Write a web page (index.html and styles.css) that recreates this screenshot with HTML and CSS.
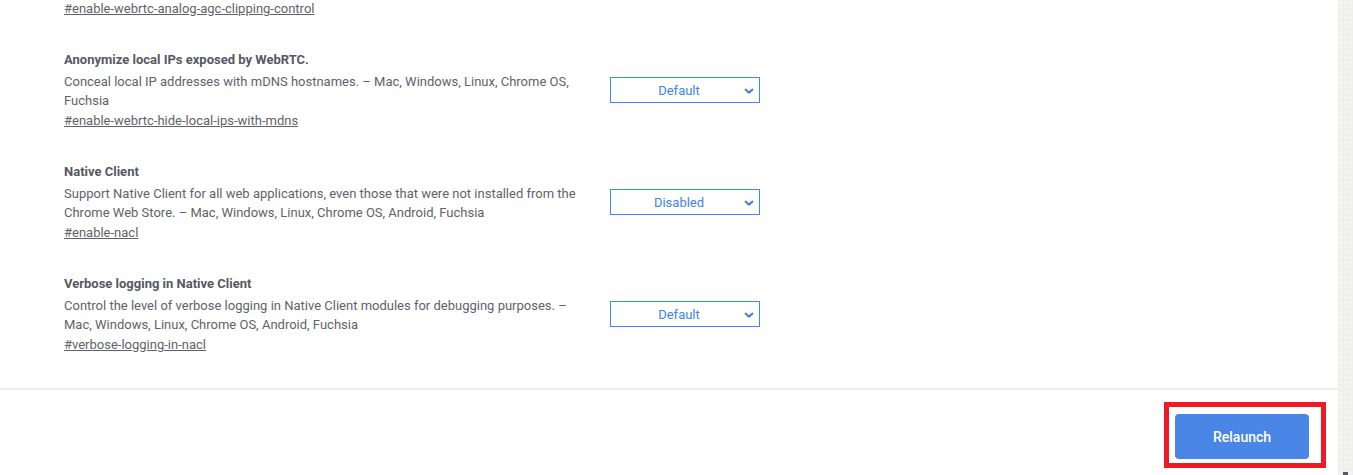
FILE: index.html
```html
<!DOCTYPE html>
<html lang="en">
<head>
<meta charset="utf-8">
<title>Experiments</title>
<link rel="stylesheet" href="styles.css">
</head>
<body>
<div class="page">
  <div class="main">
    <div class="content">
      <div class="experiments">
        <div class="experiment">
          <div class="exp-text">
            <div class="exp-name">WebRTC Analog AGC clipping control</div>
            <div class="exp-desc">Enables the WebRTC analog AGC clipping control logic. – Mac, Windows, Linux, Chrome OS, Fuchsia</div>
            <a class="exp-link" href="#">#enable-webrtc-analog-agc-clipping-control</a>
          </div>
          <div class="select"><span>Default</span><svg class="chev" width="10" height="6" viewBox="0 0 10 6"><polyline points="1,1 5,4.6 9,1" fill="none" stroke="#3f7fe9" stroke-width="2"/></svg></div>
        </div>
        <div class="experiment">
          <div class="exp-text">
            <div class="exp-name">Anonymize local IPs exposed by WebRTC.</div>
            <div class="exp-desc">Conceal local IP addresses with mDNS hostnames. – Mac, Windows, Linux, Chrome OS, Fuchsia</div>
            <a class="exp-link" href="#">#enable-webrtc-hide-local-ips-with-mdns</a>
          </div>
          <div class="select"><span>Default</span><svg class="chev" width="10" height="6" viewBox="0 0 10 6"><polyline points="1,1 5,4.6 9,1" fill="none" stroke="#3f7fe9" stroke-width="2"/></svg></div>
        </div>
        <div class="experiment">
          <div class="exp-text">
            <div class="exp-name">Native Client</div>
            <div class="exp-desc">Support Native Client for all web applications, even those that were not installed from the Chrome Web Store. – Mac, Windows, Linux, Chrome OS, Android, Fuchsia</div>
            <a class="exp-link" href="#">#enable-nacl</a>
          </div>
          <div class="select"><span>Disabled</span><svg class="chev" width="10" height="6" viewBox="0 0 10 6"><polyline points="1,1 5,4.6 9,1" fill="none" stroke="#3f7fe9" stroke-width="2"/></svg></div>
        </div>
        <div class="experiment">
          <div class="exp-text">
            <div class="exp-name">Verbose logging in Native Client</div>
            <div class="exp-desc">Control the level of verbose logging in Native Client modules for debugging purposes. – Mac, Windows, Linux, Chrome OS, Android, Fuchsia</div>
            <a class="exp-link" href="#">#verbose-logging-in-nacl</a>
          </div>
          <div class="select"><span>Default</span><svg class="chev" width="10" height="6" viewBox="0 0 10 6"><polyline points="1,1 5,4.6 9,1" fill="none" stroke="#3f7fe9" stroke-width="2"/></svg></div>
        </div>
        <div class="experiment">
          <div class="exp-text">
            <div class="exp-name">Extensions on chrome:// URLs</div>
            <div class="exp-desc">Enables running extensions on chrome:// URLs, where extensions explicitly request this permission. – Mac, Windows, Linux, Chrome OS, Android, Fuchsia</div>
            <a class="exp-link" href="#">#extensions-on-chrome-urls</a>
          </div>
          <div class="select"><span>Default</span><svg class="chev" width="10" height="6" viewBox="0 0 10 6"><polyline points="1,1 5,4.6 9,1" fill="none" stroke="#3f7fe9" stroke-width="2"/></svg></div>
        </div>
      </div>
    </div>
    <div class="separator"></div>
    <div class="footer">
      <div class="relaunch-wrap">
        <button class="relaunch">Relaunch</button>
        <div class="highlight"></div>
      </div>
    </div>
  </div>
  <div class="scrollbar"><div class="arrow"></div></div>
</div>
</body>
</html>
```

FILE: styles.css
```css
html, body {
  margin: 0;
  padding: 0;
  height: 100%;
  background: #ffffff;
}

body {
  font-family: Roboto, "Liberation Sans", Arial, sans-serif;
  font-size: 13px;
  color: #5f6368;
}

.page {
  display: flex;
  height: 475px;
  width: 1353px;
  overflow: hidden;
}

.main {
  flex: 1;
  display: flex;
  flex-direction: column;
  min-width: 0;
}

.content {
  height: 388px;
  overflow: hidden;
  flex: none;
}

.experiments {
  margin-top: -62px;
  padding-left: 64px;
}

.experiment {
  display: grid;
  grid-template-columns: 520px 150px;
  column-gap: 26px;
  align-items: center;
  height: 80px;
  margin-bottom: 32px;
}

.exp-text {
  display: flex;
  flex-direction: column;
  align-items: flex-start;
}

.exp-name {
  font-weight: 700;
  color: #555963;
  line-height: 20px;
  margin-bottom: 2px;
}

.exp-desc {
  line-height: 19px;
}

.exp-link {
  color: #5f6368;
  line-height: 19px;
  margin-top: 1px;
  text-decoration: underline;
}

.select {
  position: relative;
  box-sizing: border-box;
  width: 150px;
  height: 26px;
  border: 1px solid #4285f4;
  color: #4283ee;
  display: flex;
  align-items: center;
  justify-content: center;
  padding-right: 12px;
  background: #fff;
}

.chev {
  position: absolute;
  right: 5px;
  top: 10px;
}

.separator {
  height: 2px;
  background: #eeeeec;
  flex: none;
}

.footer {
  flex: 1;
  display: flex;
  justify-content: flex-end;
  align-items: flex-start;
  padding-top: 24px;
  padding-right: 29px;
}

.relaunch-wrap {
  position: relative;
}

.relaunch {
  display: block;
  width: 134px;
  height: 45px;
  border: none;
  border-radius: 4px;
  background: #4a86e6;
  color: #ffffff;
  font-family: Roboto, "Liberation Sans", Arial, sans-serif;
  font-size: 14px;
  font-weight: 500;
  padding: 0;
}

.highlight {
  position: absolute;
  left: -11px;
  top: -12px;
  right: -17px;
  bottom: -9px;
  border: 5px solid #ed1c24;
  pointer-events: none;
}

.scrollbar {
  width: 15px;
  flex: none;
  position: relative;
  background-color: #efefed;
  background-image: radial-gradient(circle, #f9f9f8 0.8px, transparent 1.2px);
  background-size: 5px 5px;
}

.arrow {
  position: absolute;
  left: 5px;
  bottom: 0;
  width: 5px;
  height: 3px;
  background: #5a5a60;
}
```
